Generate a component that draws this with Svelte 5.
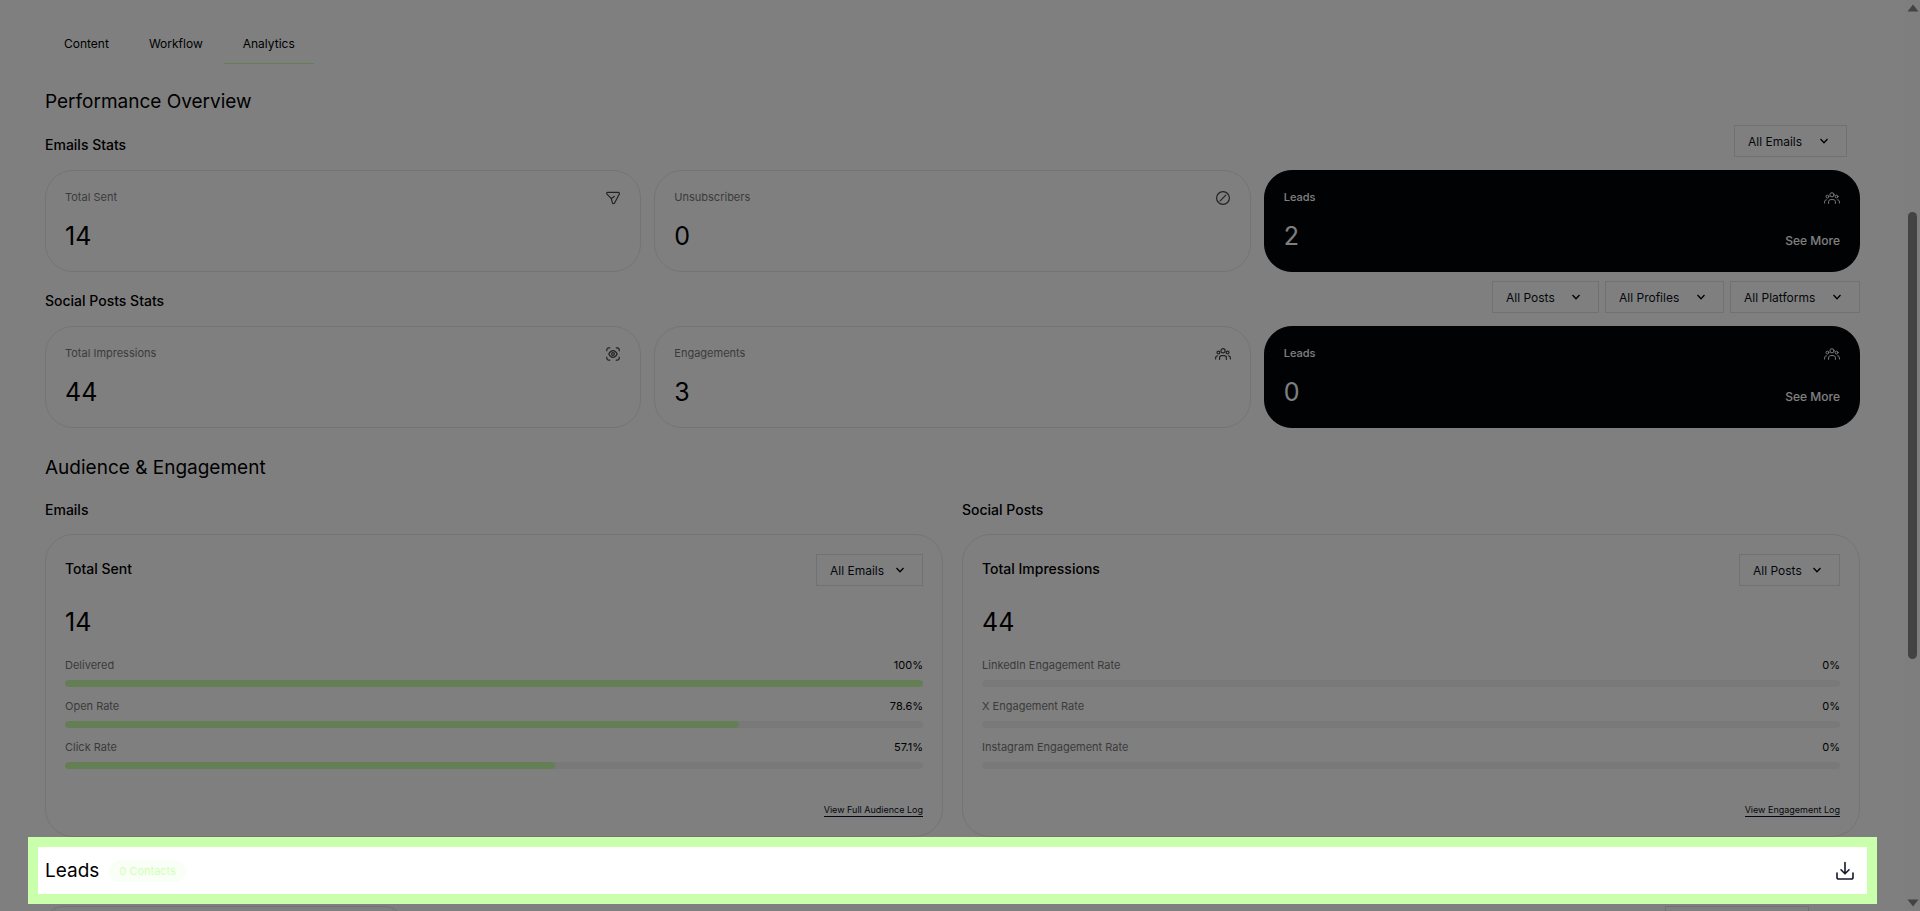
<script lang="ts">
  type Stat = { label: string; value: number; icon: string; dark?: boolean };
  type Rate = { label: string; value: number };

  const tabs = ['Content', 'Workflow', 'Analytics'];
  let activeTab = $state('Analytics');

  const statGroups: { title: string; filters: string[]; inset?: boolean; stats: Stat[] }[] = [
    {
      title: 'Emails Stats',
      filters: ['All Emails'],
      inset: true,
      stats: [
        { label: 'Total Sent', value: 14, icon: 'send' },
        { label: 'Unsubscribers', value: 0, icon: 'block' },
        { label: 'Leads', value: 2, icon: 'people', dark: true },
      ],
    },
    {
      title: 'Social Posts Stats',
      filters: ['All Posts', 'All Profiles', 'All Platforms'],
      stats: [
        { label: 'Total Impressions', value: 44, icon: 'eye' },
        { label: 'Engagements', value: 3, icon: 'people' },
        { label: 'Leads', value: 0, icon: 'people', dark: true },
      ],
    },
  ];

  const panels: { heading: string; title: string; total: number; filter: string; link: string; rates: Rate[] }[] = [
    {
      heading: 'Emails',
      title: 'Total Sent',
      total: 14,
      filter: 'All Emails',
      link: 'View Full Audience Log',
      rates: [
        { label: 'Delivered', value: 100 },
        { label: 'Open Rate', value: 78.6 },
        { label: 'Click Rate', value: 57.1 },
      ],
    },
    {
      heading: 'Social Posts',
      title: 'Total Impressions',
      total: 44,
      filter: 'All Posts',
      link: 'View Engagement Log',
      rates: [
        { label: 'LinkedIn Engagement Rate', value: 0 },
        { label: 'X Engagement Rate', value: 0 },
        { label: 'Instagram Engagement Rate', value: 0 },
      ],
    },
  ];
</script>

{#snippet dropdown(name: string, compact = false)}
  <span class="dropdown" class:compact>
    <select aria-label={name}>
      <option>{name}</option>
    </select>
    <svg class="chevron" width="10" height="10" viewBox="0 0 10 10" aria-hidden="true">
      <path d="M1.5 3 5 6.8 8.5 3" />
    </svg>
  </span>
{/snippet}

{#snippet icon(name: string)}
  <svg class="icon" width="16" height="16" viewBox="0 0 16 16" aria-hidden="true">
    {#if name === 'send'}
      <path d="M2.8 2.4h10.4c1 0 1.5.9 1 1.8L9.6 13c-.5 1-1.9.9-2.2-.2L6.3 8.6 2 4.2c-.7-.7-.3-1.8.8-1.8ZM6.3 8.6l3-2.2" />
    {:else if name === 'block'}
      <circle cx="8" cy="8" r="6.4" />
      <path d="m5.2 10.8 5.6-5.6" />
    {:else if name === 'eye'}
      <path d="M1.8 4.8v-.9c0-1.2.9-2.1 2.1-2.1h.9M11.2 1.8h.9c1.2 0 2.1.9 2.1 2.1v.9M14.2 11.2v.9c0 1.2-.9 2.1-2.1 2.1h-.9M4.8 14.2h-.9c-1.2 0-2.1-.9-2.1-2.1v-.9" />
      <path d="M3.8 8C5 5.6 6.4 4.6 8 4.6S11 5.6 12.2 8C11 10.4 9.6 11.4 8 11.4S5 10.4 3.8 8Z" />
      <circle cx="8" cy="8" r="1.4" />
    {:else}
      <circle cx="8" cy="4.8" r="2.1" />
      <circle cx="3.4" cy="6.6" r="1.4" />
      <circle cx="12.6" cy="6.6" r="1.4" />
      <path d="M4.6 13.4v-1.6c0-1.3.9-2.2 2.2-2.2h2.4c1.3 0 2.2.9 2.2 2.2v1.6M.6 13v-1.2c0-1.2.7-1.9 1.8-2M15.4 13v-1.2c0-1.2-.7-1.9-1.8-2" />
    {/if}
  </svg>
{/snippet}

<div class="screen">
  <main class="page">
    <nav class="tabs">
      {#each tabs as tab}
        <button class="tab" class:active={tab === activeTab} onclick={() => (activeTab = tab)}>{tab}</button>
      {/each}
    </nav>

    <h2 class="heading">Performance Overview</h2>
    {#each statGroups as group}
      <section class="group">
        <div class="group-head">
          <h3 class="subheading">{group.title}</h3>
          <div class="filters" class:inset={group.inset}>
            {#each group.filters as filter}
              {@render dropdown(filter)}
            {/each}
          </div>
        </div>
        <div class="stats">
          {#each group.stats as stat}
            <article class="stat" class:dark={stat.dark}>
              <div class="row">
                <span class="label">{stat.label}</span>
                {@render icon(stat.icon)}
              </div>
              <div class="row">
                <span class="value">{stat.value}</span>
                {#if stat.dark}
                  <a class="more" href="#leads">See More</a>
                {/if}
              </div>
            </article>
          {/each}
        </div>
      </section>
    {/each}

    <h2 class="heading audience">Audience &amp; Engagement</h2>
    <div class="panels">
      {#each panels as panel}
        <section>
          <h3 class="subheading">{panel.heading}</h3>
          <article class="panel">
            <div class="row">
              <h4 class="subheading">{panel.title}</h4>
              {@render dropdown(panel.filter, true)}
            </div>
            <span class="value">{panel.total}</span>
            <div class="rates">
              {#each panel.rates as rate}
                <div class="rate">
                  <div class="row">
                    <span class="label">{rate.label}</span>
                    <span class="percent">{rate.value}%</span>
                  </div>
                  <div class="track">
                    <div class="fill" style="width: {rate.value}%"></div>
                  </div>
                </div>
              {/each}
            </div>
            <a class="log" href="#log">{panel.link}</a>
          </article>
        </section>
      {/each}
    </div>

    <section class="leads" id="leads">
      <h2 class="heading">Leads</h2>
      <span class="badge">0 Contacts</span>
      <button class="download" aria-label="Download leads">
        <svg width="20" height="20" viewBox="0 0 20 20" aria-hidden="true">
          <path d="M10 1.5v11M6 8.8l4 4 4-4M2 12v4.2c0 1.2.6 1.8 1.8 1.8h12.4c1.2 0 1.8-.6 1.8-1.8V12" />
        </svg>
      </button>
    </section>

    <div class="lead-tools">
      <input class="search" type="search" aria-label="Search leads" />
      <select class="sort" aria-label="Sort leads"></select>
    </div>
  </main>

  <div class="scrollbar" aria-hidden="true">
    <svg width="12" height="8" viewBox="0 0 12 8"><path d="M6 0.5 11.5 7.5H0.5Z" /></svg>
    <div class="thumb"></div>
    <svg width="12" height="8" viewBox="0 0 12 8"><path d="M0.5 0.5h11L6 7.5Z" /></svg>
  </div>
</div>

<style>
  :global(body) {
    margin: 0;
    background: #fff;
  }
  .screen {
    display: grid;
    grid-template-columns: 1fr 15px;
    grid-template-rows: 100vh;
    overflow: hidden;
    background: #fff;
    color: #000;
    font-family: Inter, 'Liberation Sans', sans-serif;
    font-size: 13px;
  }
  .screen * {
    box-sizing: border-box;
  }
  .page {
    min-width: 0;
    padding: 24px 45px 0;
  }
  h2,
  h3,
  h4 {
    margin: 0;
  }
  button,
  select,
  input {
    font: inherit;
    color: inherit;
  }

  .tabs {
    display: flex;
    gap: 2px;
  }
  .tab {
    height: 40px;
    padding: 0 19px;
    background: none;
    border: 0;
    border-bottom: 1px solid transparent;
    font-size: 12px;
    cursor: pointer;
  }
  .tab.active {
    border-bottom-color: #caffab;
  }

  .heading {
    font-size: 19px;
    font-weight: 400;
    line-height: 24px;
  }
  .tabs + .heading {
    margin-top: 26px;
  }
  .subheading {
    font-size: 14px;
    font-weight: 500;
    line-height: 20px;
  }
  .group {
    padding-top: 9px;
  }
  .heading + .group {
    padding-top: 11px;
  }
  .group-head {
    display: flex;
    justify-content: space-between;
    height: 45px;
  }
  .group-head .subheading {
    padding-top: 10px;
  }
  .filters {
    display: flex;
    align-items: flex-start;
    gap: 6px;
  }
  .filters.inset {
    padding-right: 13px;
  }

  .dropdown {
    display: grid;
    align-items: center;
  }
  .dropdown select {
    grid-area: 1 / 1;
    height: 32px;
    padding: 0 43px 0 13px;
    appearance: none;
    background: none;
    border: 1px solid #e2e2e2;
    border-radius: 0;
    color: #0a0f20;
    font-size: 12px;
  }
  .chevron {
    grid-area: 1 / 1;
    justify-self: end;
    margin-right: 18px;
    fill: none;
    stroke: #000;
    stroke-width: 1.3;
    pointer-events: none;
  }
  .compact select {
    padding-right: 37px;
  }

  .stats {
    display: grid;
    grid-template-columns: repeat(3, 1fr);
    gap: 13px;
  }
  .stat {
    display: flex;
    flex-direction: column;
    gap: 14px;
    padding: 19px;
    border: 1px solid #e8e8e8;
    border-radius: 28px;
  }
  .row {
    display: flex;
    justify-content: space-between;
  }
  .label {
    color: #777;
    font-size: 11px;
    line-height: 16px;
  }
  .stat .label {
    line-height: 14px;
  }
  .icon {
    fill: none;
    stroke: #444;
    stroke-width: 1.2;
    stroke-linecap: round;
    stroke-linejoin: round;
  }
  .value {
    font-size: 25px;
    line-height: 32px;
  }
  .dark {
    background: #020408;
    border-color: #020408;
    color: #fff;
  }
  .dark .label {
    color: #fff;
    font-weight: 500;
  }
  .dark .icon {
    stroke: #fff;
    stroke-width: 1;
  }
  .more {
    align-self: flex-end;
    color: inherit;
    font-size: 12px;
    font-weight: 500;
    line-height: 22px;
    text-decoration: none;
  }

  .audience {
    margin-top: 28px;
  }
  .panels {
    display: grid;
    grid-template-columns: 1fr 1fr;
    gap: 19px;
    padding-top: 20px;
  }
  .panel {
    display: flex;
    flex-direction: column;
    margin-top: 14px;
    padding: 19px;
    border: 1px solid #e8e8e8;
    border-radius: 28px;
  }
  .panel h4 {
    padding-top: 5px;
  }
  .panel .value {
    margin-top: 20px;
  }
  .rates {
    display: flex;
    flex-direction: column;
    gap: 11px;
    margin-top: 19px;
  }
  .rate {
    display: flex;
    flex-direction: column;
    gap: 7px;
  }
  .percent {
    font-size: 11px;
    line-height: 16px;
  }
  .track {
    height: 7px;
    border-radius: 4px;
    background: #f3f3f3;
    overflow: hidden;
  }
  .fill {
    height: 100%;
    border-radius: 4px;
    background: #caffab;
  }
  .log {
    align-self: flex-end;
    margin-top: 34px;
    border-bottom: 1px solid #0a0f20;
    color: #0a0f20;
    font-size: 9px;
    line-height: 13px;
    text-decoration: none;
  }

  /* the spotlight: everything outside the green frame is dimmed by its shadow */
  .leads {
    position: relative;
    z-index: 10;
    display: flex;
    align-items: center;
    gap: 10px;
    height: 67px;
    margin: 0 -17px;
    padding: 0 7px;
    background: #fff;
    border: 10px solid #caffab;
    box-shadow: 0 0 0 9999px rgba(0, 0, 0, 0.5);
  }
  .badge {
    padding: 0 10px;
    border-radius: 11px;
    background: #f9fff6;
    color: #d0ffb4;
    font-size: 11px;
    line-height: 22px;
  }
  .download {
    display: flex;
    margin-left: auto;
    padding: 0 5px;
    background: none;
    border: 0;
    cursor: pointer;
  }
  .download svg {
    fill: none;
    stroke: #14192b;
    stroke-width: 1.6;
    stroke-linecap: round;
    stroke-linejoin: round;
  }

  .lead-tools {
    display: flex;
    justify-content: space-between;
    padding: 2px 51px 0 0;
  }
  .search {
    width: 358px;
    height: 36px;
    background: none;
    border: 1px solid #e2e2e2;
    border-radius: 18px;
  }
  .sort {
    width: 144px;
    height: 36px;
    appearance: none;
    background: none;
    border: 1px solid #e2e2e2;
    border-radius: 0;
  }

  .scrollbar {
    display: grid;
    grid-template-rows: 16px 196fr 447fr 236fr 16px;
    place-items: center;
    background: #fcfcfc;
  }
  .scrollbar svg {
    fill: #868686;
  }
  .scrollbar svg:last-child {
    grid-row: 5;
  }
  .thumb {
    grid-row: 3;
    width: 9px;
    height: 100%;
    border-radius: 5px;
    background: #868686;
  }
</style>
